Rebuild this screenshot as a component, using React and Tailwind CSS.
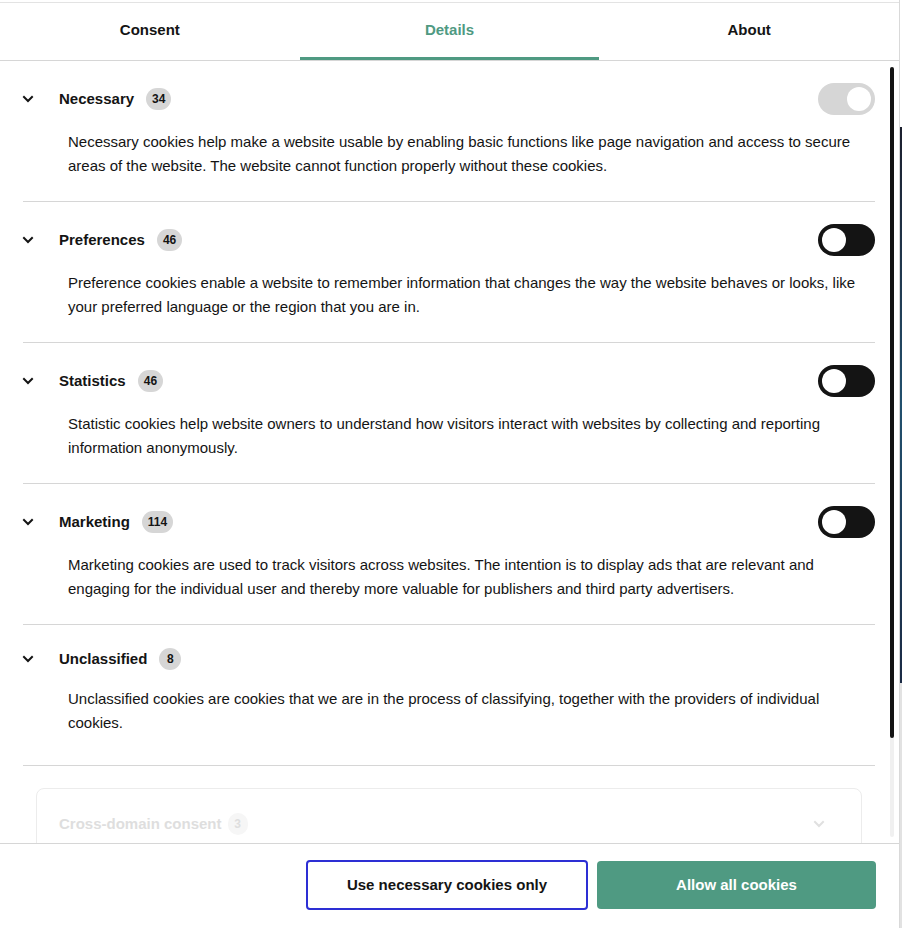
import React from "react";

const sections = [
  {
    title: "Necessary",
    count: "34",
    toggle: "disabled",
    text: "Necessary cookies help make a website usable by enabling basic functions like page navigation and access to secure areas of the website. The website cannot function properly without these cookies.",
  },
  {
    title: "Preferences",
    count: "46",
    toggle: "off",
    text: "Preference cookies enable a website to remember information that changes the way the website behaves or looks, like your preferred language or the region that you are in.",
  },
  {
    title: "Statistics",
    count: "46",
    toggle: "off",
    text: "Statistic cookies help website owners to understand how visitors interact with websites by collecting and reporting information anonymously.",
  },
  {
    title: "Marketing",
    count: "114",
    toggle: "off",
    text: "Marketing cookies are used to track visitors across websites. The intention is to display ads that are relevant and engaging for the individual user and thereby more valuable for publishers and third party advertisers.",
  },
];

function Chevron({ className = "" }) {
  return (
    <svg width="12" height="12" viewBox="0 0 12 12" className={className} fill="none">
      <path d="M2 4 L6 8 L10 4" stroke="currentColor" strokeWidth="2" strokeLinecap="square" />
    </svg>
  );
}

function Toggle({ state }) {
  if (state === "disabled") {
    return (
      <div className="w-[57px] h-8 rounded-full bg-[#d6d6d6] flex items-center justify-end px-1">
        <div className="w-6 h-6 rounded-full bg-white" />
      </div>
    );
  }
  return (
    <div className="w-[57px] h-8 rounded-full bg-[#141414] flex items-center justify-start px-1">
      <div className="w-6 h-6 rounded-full bg-white" />
    </div>
  );
}

function Badge({ children }) {
  return (
    <span className="ml-3 h-[22px] min-w-[22px] px-[6px] rounded-full bg-[#d6d6d6] text-[12px] font-bold flex items-center justify-center">
      {children}
    </span>
  );
}

export default function App() {
  return (
    <div className="w-[902px] h-[928px] flex bg-white overflow-hidden text-[#141414] font-['Liberation_Sans',Arial,Helvetica,sans-serif]">
      <div className="w-[899px] h-full flex flex-col pt-[2px]">
        <div className="border-t border-[#e3e3e3] flex h-[59px] border-b border-b-[#d6d6d6]">
          {["Consent", "Details", "About"].map((t) => (
            <div key={t} className="w-[300px] flex flex-col">
              <div
                className={`flex-1 flex items-center justify-center text-[15px] font-bold ${
                  t === "Details" ? "text-[#4f9a82]" : "text-[#141414]"
                }`}
              >
                {t}
              </div>
              <div className={`h-[3px] ${t === "Details" ? "bg-[#4f9a82]" : "bg-transparent"}`} />
            </div>
          ))}
        </div>

        <div className="relative flex-1 overflow-hidden">
          <div className="pl-[23px] pr-[24px]">
            {sections.map((s) => (
              <div key={s.title} className="pt-[22px] pb-[23px] border-b border-[#d6d6d6]">
                <div className="flex items-center h-8">
                  <Chevron className="text-[#141414] ml-[-1px]" />
                  <span className="ml-[25px] text-[15px] font-bold">{s.title}</span>
                  <Badge>{s.count}</Badge>
                  <div className="ml-auto">
                    <Toggle state={s.toggle} />
                  </div>
                </div>
                <p className="mt-[15px] pl-[45px] text-[15px] leading-6">{s.text}</p>
              </div>
            ))}
            <div className="pt-[23px] pb-[30px] border-b border-[#d6d6d6]">
              <div className="flex items-center h-[22px]">
                <Chevron className="text-[#141414] ml-[-1px]" />
                <span className="ml-[25px] text-[15px] font-bold">Unclassified</span>
                <Badge>8</Badge>
              </div>
              <p className="mt-[17px] pl-[45px] text-[15px] leading-6">
                Unclassified cookies are cookies that we are in the process of classifying, together with the providers of individual cookies.
              </p>
            </div>
            <div className="mt-[22px] mx-[13px] h-[120px] border border-[#ececec] rounded-lg px-[22px] pt-[24px]">
              <div className="flex items-center h-[22px]">
                <span className="text-[15px] font-bold text-[#dedede]">Cross-domain consent</span>
                <span className="ml-[6px] h-[22px] min-w-[20px] px-[6px] rounded-full bg-[#f6f6f6] text-[12px] font-bold text-[#dedede] flex items-center justify-center">
                  3
                </span>
                <Chevron className="ml-auto mr-[14px] text-[#e0e0e0]" />
              </div>
            </div>
          </div>
          <div className="absolute left-[890px] top-[6px] w-[4px] h-[770px] rounded-full bg-[#f0f0f0]">
            <div className="w-[4px] h-[671px] rounded-full bg-[#141414]" />
          </div>
        </div>

        <div className="h-[85px] border-t border-[#d6d6d6] flex items-start justify-end pr-[23px] pt-[16px]">
          <button className="w-[282px] h-[50px] border-2 border-[#2d2fd4] rounded-[4px] bg-white text-[15px] font-bold text-[#141414]">
            Use necessary cookies only
          </button>
          <button className="ml-[9px] mt-[1px] w-[279px] h-[48px] rounded-[4px] bg-[#4f9a82] text-[15px] font-bold text-white">
            Allow all cookies
          </button>
        </div>
      </div>
      <div className="w-[3px] h-full border-l border-[#d9d9d9] flex flex-col">
        <div className="h-[127px] bg-white" />
        <div className="h-[556px] bg-gradient-to-b from-[#1b1f2e] via-[#21506e] to-[#1a2a44]" />
        <div className="flex-1 bg-[#e2e2e2]" />
      </div>
    </div>
  );
}
